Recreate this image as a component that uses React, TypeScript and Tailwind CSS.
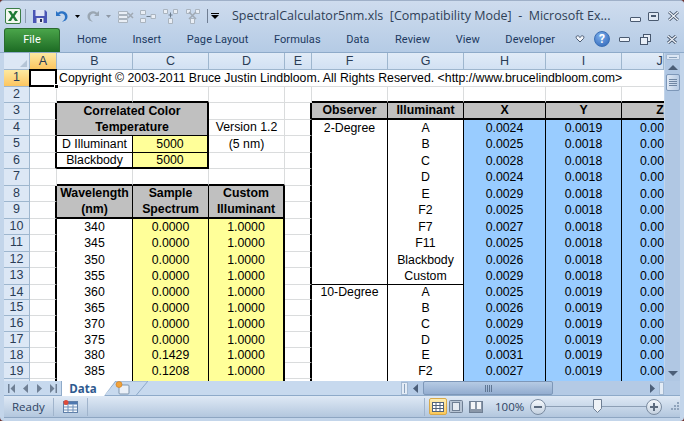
import type { ReactNode } from "react";

const rightBorder = {
  g: "border-r border-r-[#dadcdd]",
  k: "border-r border-r-black",
  K: "border-r-2 border-r-black",
  n: "",
};
const bottomBorder = {
  g: "border-b border-b-[#dadcdd]",
  k: "border-b border-b-black",
  K: "border-b-2 border-b-black",
  n: "",
};
type Line = keyof typeof rightBorder;

function Cell({ r = "g", b = "g", cls = "", children }: { r?: Line; b?: Line; cls?: string; children?: ReactNode }) {
  return (
    <div className={`flex items-center justify-center overflow-hidden whitespace-nowrap ${rightBorder[r]} ${bottomBorder[b]} ${cls}`}>
      {children}
    </div>
  );
}

function ColHead({ label, active, cls = "" }: { label: string; active?: boolean; cls?: string }) {
  return (
    <div className={`flex items-center justify-center border-r border-b border-r-[#9eb6ce] border-b-[#9eb6ce] text-[12.5px] text-[#2a3c55] ${active ? "bg-linear-to-b from-[#fde9a0] to-[#fcc55f]" : "bg-linear-to-b from-[#e1ebf7] to-[#d2e1f3]"}`}>
      <span className={cls}>{label}</span>
    </div>
  );
}

function RowHead({ n, active }: { n: number; active?: boolean }) {
  return (
    <div className={`flex items-center justify-center border-r border-b border-r-[#9eb6ce] border-b-[#9eb6ce] text-[12.5px] text-[#2a3c55] ${active ? "bg-linear-to-b from-[#fde9a0] to-[#fcc55f]" : "bg-[#dce7f5]"}`}>
      {n <= 19 ? n : ""}
    </div>
  );
}

const illuminants = ["A", "B", "C", "D", "E", "F2", "F7", "F11", "Blackbody", "Custom", "A", "B", "C", "D", "E", "F2"];
const xValues = ["0.0024", "0.0025", "0.0028", "0.0024", "0.0029", "0.0025", "0.0027", "0.0025", "0.0026", "0.0029", "0.0025", "0.0026", "0.0029", "0.0025", "0.0031", "0.0027"];
const yValues = ["0.0019", "0.0018", "0.0018", "0.0018", "0.0018", "0.0018", "0.0018", "0.0018", "0.0018", "0.0018", "0.0019", "0.0019", "0.0019", "0.0019", "0.0019", "0.0019"];
const wavelengths = [340, 345, 350, 355, 360, 365, 370, 375, 380, 385];
const samples = ["0.0000", "0.0000", "0.0000", "0.0000", "0.0000", "0.0000", "0.0000", "0.0000", "0.1429", "0.1208"];

const gray = "bg-[#c0c0c0] font-bold";
const yellow = "bg-[#ffff99]";
const blue = "bg-[#99ccff]";

function RightTable({ row }: { row: number }) {
  if (row === 3) {
    return (
      <>
        <Cell r="K" />
        <Cell r="k" b="K" cls={gray}>Observer</Cell>
        <Cell r="k" b="K" cls={gray}>Illuminant</Cell>
        <Cell r="k" b="K" cls={gray}>X</Cell>
        <Cell r="k" b="K" cls={gray}>Y</Cell>
        <Cell r="n" b="K" cls={gray}><span className="ml-[34px]">Z</span></Cell>
      </>
    );
  }
  const i = row - 4;
  const split: Line = row === 13 ? "k" : "n";
  return (
    <>
      <Cell r="K" />
      <Cell r="k" b={split} cls="bg-white">{row === 4 ? "2-Degree" : row === 14 ? "10-Degree" : ""}</Cell>
      <Cell r="k" b={split} cls="bg-white">{illuminants[i]}</Cell>
      <Cell r="k" b="n" cls={blue}>{xValues[i]}</Cell>
      <Cell r="k" b="n" cls={blue}>{yValues[i]}</Cell>
      <Cell r="n" b="n" cls={blue}><span className="ml-[18px]">{row <= 19 ? "0.00" : ""}</span></Cell>
    </>
  );
}

function Sheet() {
  return (
    <div className="w-[660px] h-[328px] overflow-hidden bg-white">
      <div className="grid grid-cols-[26px_27px_76px_76px_76px_27px_76px_76px_82px_76px_42px] grid-rows-[17px_repeat(13,16.5px)_repeat(7,15.8px)] font-['Liberation_Sans',sans-serif] text-[12.3px] text-black">
        <div className="flex items-end justify-end border-r border-b border-r-[#9eb6ce] border-b-[#9eb6ce] bg-[#dce7f5] p-[2px]">
          <svg width="7" height="7" viewBox="0 0 7 7"><path d="M7 0V7H0Z" fill="#b4c4d6" /></svg>
        </div>
        <ColHead label="A" active />
        {["B", "C", "D", "E", "F", "G", "H", "I"].map((c) => <ColHead key={c} label={c} />)}
        <ColHead label="J" cls="ml-[34px]" />

        {/* row 1 */}
        <RowHead n={1} active />
        <div className="relative z-10 border-r border-b border-r-[#dadcdd] border-b-[#dadcdd]">
          <div className="absolute -left-px -top-px -right-px -bottom-px border-2 border-black" />
          <div className="absolute -right-[3px] -bottom-[3px] w-[5px] h-[5px] bg-black border border-white" />
        </div>
        <div className="col-span-9 flex items-center pl-[2px] border-b border-b-[#dadcdd] whitespace-nowrap overflow-hidden">
          Copyright © 2003-2011 Bruce Justin Lindbloom. All Rights Reserved. &lt;http://www.brucelindbloom.com&gt;
        </div>

        {/* row 2 */}
        <RowHead n={2} />
        <Cell />
        <Cell b="K" />
        <Cell b="K" />
        <Cell />
        <Cell />
        <Cell b="K" />
        <Cell b="K" />
        <Cell b="K" />
        <Cell b="K" />
        <Cell r="n" b="K" />

        {/* row 3 */}
        <RowHead n={3} />
        <Cell r="K" />
        <div className={`col-span-2 row-span-2 flex items-center justify-center text-center leading-[16.5px] border-r-2 border-b border-r-black border-b-black ${gray}`}>
          Correlated Color<br />Temperature
        </div>
        <Cell />
        <RightTable row={3} />

        {/* row 4 */}
        <RowHead n={4} />
        <Cell r="K" />
        <Cell>Version 1.2</Cell>
        <RightTable row={4} />

        {/* row 5 */}
        <RowHead n={5} />
        <Cell r="K" />
        <Cell r="k" b="k" cls="bg-white">D Illuminant</Cell>
        <Cell r="K" b="k" cls={yellow}>5000</Cell>
        <Cell>(5 nm)</Cell>
        <RightTable row={5} />

        {/* row 6 */}
        <RowHead n={6} />
        <Cell r="K" />
        <Cell r="k" b="K" cls="bg-white">Blackbody</Cell>
        <Cell r="K" b="K" cls={yellow}>5000</Cell>
        <Cell />
        <RightTable row={6} />

        {/* row 7 */}
        <RowHead n={7} />
        <Cell />
        <Cell b="K" />
        <Cell b="K" />
        <Cell b="K" />
        <RightTable row={7} />

        {/* row 8 and 9: merged headers */}
        <RowHead n={8} />
        <Cell r="K" />
        <div className={`row-span-2 flex items-center justify-center text-center leading-[16.5px] border-r border-b-2 border-r-black border-b-black ${gray}`}>Wavelength<br />(nm)</div>
        <div className={`row-span-2 flex items-center justify-center text-center leading-[16.5px] border-r border-b-2 border-r-black border-b-black ${gray}`}>Sample<br />Spectrum</div>
        <div className={`row-span-2 flex items-center justify-center text-center leading-[16.5px] border-r-2 border-b-2 border-r-black border-b-black ${gray}`}>Custom<br />Illuminant</div>
        <RightTable row={8} />
        <RowHead n={9} />
        <Cell r="K" />
        <RightTable row={9} />

        {wavelengths.map((w, i) => (
          <div key={w} className="contents">
            <RowHead n={i + 10} />
            <Cell r="K" />
            <Cell r="k" b="n" cls="bg-white">{w}</Cell>
            <Cell r="k" b="n" cls={yellow}>{samples[i]}</Cell>
            <Cell r="K" b="n" cls={yellow}>1.0000</Cell>
            <RightTable row={i + 10} />
          </div>
        ))}

        {/* row 20, only its first pixels show above the tab bar */}
        <RowHead n={20} />
        <Cell r="K" />
        <Cell r="k" b="n" cls="bg-white" />
        <Cell r="k" b="n" cls={yellow} />
        <Cell r="K" b="n" cls={yellow} />
        <RightTable row={20} />
      </div>
    </div>
  );
}

function GreyBlock({ d }: { d: string }) {
  return <path d={d} fill="#e9eef5" stroke="#aab4bf" strokeWidth="1" />;
}

function QuickAccess() {
  return (
    <div className="flex items-center h-[25px] pl-[5px] pt-[5px]">
      <svg width="16" height="16" viewBox="0 0 16 16">
        <rect x="0.5" y="0.5" width="15" height="15" rx="1.5" fill="#f3f8ef" stroke="#3b7d47" />
        <path d="M3 3h3l2 3.2L10 3h3L9.6 8 13 13h-3L8 9.8 6 13H3l3.4-5z" fill="#1f7a35" />
      </svg>
      <div className="ml-[4px] w-px h-[14px] bg-[#8c9bb0]" />
      <svg className="ml-[7px]" width="14" height="14" viewBox="0 0 14 14">
        <path d="M0 1h12l2 2v11H0z" fill="#4a55b5" />
        <rect x="2.5" y="1" width="9" height="6" fill="#dfe4f5" />
        <rect x="3.5" y="9" width="7" height="5" fill="#e6e8ef" />
        <rect x="7" y="10" width="2" height="3" fill="#2b2f5e" />
      </svg>
      <svg className="ml-[8px]" width="13" height="13" viewBox="0 0 13 13">
        <path d="M1 1v5h5L4.2 4.4C6.500 2.600 10 3.800 10 7c0 2-1.200 3.500-3 4.500 3.500 0 5.500-2.300 5.500-5C12.500 2 7-.5 3 2.800z" fill="#2c73c5" />
      </svg>
      <svg className="ml-[7px]" width="5" height="3" viewBox="0 0 5 3"><path d="M0 0h5L2.500 3z" fill="#000" /></svg>
      <svg className="ml-[7px]" width="13" height="13" viewBox="0 0 13 13">
        <path d="M12 1v5H7l1.800-1.600C6.500 2.600 3 3.800 3 7c0 2 1.200 3.500 3 4.500-3.500 0-5.500-2.300-5.500-5C.5 2 6-.5 10 2.800z" fill="#9aa6b2" />
      </svg>
      <svg className="ml-[6px]" width="5" height="3" viewBox="0 0 5 3"><path d="M0 0h5L2.500 3z" fill="#8e98a5" /></svg>
      <svg className="ml-[7px]" width="16" height="13" viewBox="0 0 16 13">
        <GreyBlock d="M.5 1.500h9v3h-9z" />
        <GreyBlock d="M.5 5.500h9v3h-9z" />
        <GreyBlock d="M.5 9.500h9v3h-9z" />
        <path d="M10 3l5 5M15 3l-5 5" stroke="#a0a9b3" strokeWidth="1.500" />
      </svg>
      <svg className="ml-[6px]" width="16" height="13" viewBox="0 0 16 13">
        <GreyBlock d="M.5 .5h5v4h-5z" />
        <GreyBlock d="M.5 8.500h5v4h-5z" />
        <GreyBlock d="M11 4.500h4.500v4H11z" />
        <path d="M6.500 6.500h4" stroke="#6d7c8c" />
      </svg>
      <svg className="ml-[7px]" width="15" height="15" viewBox="0 0 15 15">
        <GreyBlock d="M.5 .5h4v4h-4z" />
        <GreyBlock d="M10.500 .5h4v4h-4z" />
        <GreyBlock d="M5.500 9.500h4v5h-4z" />
        <path d="M7.500 3.500v5M5.500 6h4" stroke="#6d7c8c" />
      </svg>
      <svg className="ml-[8px]" width="14" height="15" viewBox="0 0 14 15">
        <GreyBlock d="M.5 .5h4v4h-4z" />
        <GreyBlock d="M9.500 .5h4v4h-4z" />
        <GreyBlock d="M4.500 9.500h4v5h-4z" />
        <path d="M3 3l7 7M10 3l-7 7" stroke="#a0a9b3" strokeWidth="1.500" />
      </svg>
      <div className="ml-[7px] w-px h-[14px] bg-[#6f7e93]" />
      <svg className="ml-[3px]" width="9" height="6" viewBox="0 0 9 6"><path d="M0 0h8v1H0zM0 2h8L4 6z" fill="#000" /></svg>
      <div className="ml-[12px] text-[12.5px] text-[#2f3f57] whitespace-pre font-['Open_Sans',sans-serif]">
        SpectralCalculator5nm.xls  [Compatibility Mode]  -  Microsoft Ex...
      </div>
      <div className="ml-auto flex items-center pr-[4px]">
        <div className="w-[11px] h-[5px] mt-[6px] bg-[#eef3fa] border border-[#4a5a70] rounded-[1px]" />
        <div className="ml-[7px] w-[11px] h-[9px] border border-[#4a5a70] rounded-[1px] bg-[#dfe8f3] flex items-center justify-center">
          <div className="w-[5px] h-[2px] bg-[#4a5a70]" />
        </div>
        <svg className="ml-[8px]" width="13" height="10" viewBox="0 0 13 10">
          <path d="M2 1l9 8M11 1L2 9" stroke="#46566c" strokeWidth="3" />
          <path d="M2 1l9 8M11 1L2 9" stroke="#f0f4fa" strokeWidth="1.200" />
        </svg>
      </div>
    </div>
  );
}

function RibbonTabs() {
  return (
    <div className="flex items-end h-[26px] pl-[4px] font-['Roboto',sans-serif] text-[11px] tracking-[0.1px] text-[#20395f]">
      <div className="w-[56px] h-[24px] flex items-center justify-center rounded-t-[3px] border border-[#2a6b2e] border-b-0 bg-linear-to-b from-[#4aa54a] to-[#1c6b24] text-white">
        File
      </div>
      <div className="ml-[17px] h-[24px] flex items-center gap-[25.5px] whitespace-nowrap">
        {["Home", "Insert", "Page Layout", "Formulas", "Data", "Review", "View", "Developer"].map((t) => (
          <span key={t}>{t}</span>
        ))}
      </div>
      <div className="ml-auto h-[26px] flex items-center pr-[6px]">
        <svg width="10" height="8" viewBox="0 0 10 8">
          <path d="M2.500 .8C1 .8 .8 2.500 1.500 3.500L5 7l3.500-3.500C9.200 2.500 9 .8 7.500 .8 6.300 .8 5.500 1.500 5 2.500 4.500 1.500 3.700 .8 2.500 .8z" fill="#f2f5fa" stroke="#4b5b72" />
        </svg>
        <div className="ml-[9px] w-[16px] h-[16px] rounded-full flex items-center justify-center bg-[radial-gradient(circle_at_40%_30%,#7fb0ee,#2a62b4)] border border-[#3a6fb5] text-white text-[12px] font-bold leading-none">
          ?
        </div>
        <div className="ml-[9px] w-[11px] h-[5px] bg-[#eef3fa] border border-[#4a5a70] rounded-[1px]" />
        <svg className="ml-[10px]" width="11" height="11" viewBox="0 0 11 11">
          <rect x="3.500" y=".5" width="7" height="7" fill="#e7eef7" stroke="#46566c" />
          <rect x=".5" y="3.500" width="7" height="7" fill="#e7eef7" stroke="#46566c" />
        </svg>
        <svg className="ml-[15px]" width="12" height="9" viewBox="0 0 12 9">
          <path d="M2 1l8 7M10 1L2 8" stroke="#46566c" strokeWidth="3" />
          <path d="M2 1l8 7M10 1L2 8" stroke="#f0f4fa" strokeWidth="1.200" />
        </svg>
      </div>
    </div>
  );
}

function VerticalScroll() {
  return (
    <div className="w-[16px] h-[328px] flex flex-col items-center bg-[#b0c7e3] border-l border-l-[#c2d4e9]">
      <div className="w-[14px] h-[6px] mt-[1px] flex items-center justify-center bg-[#dbe6f4] border border-[#a4b9d2] rounded-[1px]">
        <div className="w-[8px] h-px bg-[#8ba2bd]" />
      </div>
      <svg className="mt-[5px]" width="10" height="5" viewBox="0 0 10 5"><path d="M5 0l5 5H0z" fill="#4b5e78" /></svg>
      <div className="mt-[4px] w-[14px] h-[17px] flex flex-col items-center justify-center gap-px rounded-[2px] border border-[#7d97b8] bg-linear-to-r from-[#dfe8f4] to-[#b7cbe4]">
        <div className="w-[8px] h-px bg-[#6f86a3]" />
        <div className="w-[8px] h-px bg-[#6f86a3]" />
        <div className="w-[8px] h-px bg-[#6f86a3]" />
        <div className="w-[8px] h-px bg-[#6f86a3]" />
      </div>
      <svg className="mt-auto mb-[5px]" width="10" height="5" viewBox="0 0 10 5"><path d="M0 0h10L5 5z" fill="#4b5e78" /></svg>
    </div>
  );
}

function Nav({ d }: { d: string }) {
  return <svg width="7" height="9" viewBox="0 0 7 9"><path d={d} fill="#6f7f94" /></svg>;
}

function SheetTabs() {
  return (
    <div className="flex h-[15px] ml-[4px] w-[676px] bg-[#c7d9ee] border-b border-b-[#8eaac9]">
      <div className="w-[58px] flex items-center justify-center gap-[7px] border-r border-r-[#8eaac9]">
        <Nav d="M0 0h1.500v9H0zM7 0v9L2.500 4.500z" />
        <Nav d="M6 0v9L1 4.500z" />
        <Nav d="M1 0v9l5-4.500z" />
        <Nav d="M0 0v9l4.500-4.500zM5.500 0H7v9H5.500z" />
      </div>
      <div className="w-[42px] h-[15px] bg-white flex items-center justify-center font-['Open_Sans',sans-serif] font-bold text-[11.5px] text-[#2e5a8f]">
        Data
      </div>
      <svg width="44" height="15" viewBox="0 0 44 15">
        <path d="M0 15V14.500L12 0H44L32 14.500H1" fill="#c7d9ee" stroke="#8eaac9" />
        <path d="M0 15V0H11z" fill="#fff" />
        <rect x="15" y="4" width="10" height="9" rx="1" fill="#eaf0f8" stroke="#7f95ad" />
        <circle cx="15" cy="3.500" r="3" fill="#f2a33a" stroke="#c9781e" strokeWidth=".6" />
      </svg>
      <div className="w-[253px]" />
      <div className="flex-1 flex items-center bg-[#b4cae5]">
        <div className="w-[7px] h-[13px] bg-[#e4ecf6] border border-[#a3b8d1] flex items-center justify-center">
          <div className="w-px h-[9px] bg-[#8ba2bd]" />
        </div>
        <svg className="ml-[5px]" width="5" height="9" viewBox="0 0 5 9"><path d="M5 0v9L0 4.500z" fill="#4b5e78" /></svg>
        <div className="ml-[5px] w-[130px] h-[14px] flex items-center justify-center gap-px rounded-[2px] border border-[#7d97b8] bg-linear-to-b from-[#b6cbe4] to-[#93add0]">
          <div className="w-px h-[7px] bg-[#5f7693]" />
          <div className="w-px h-[7px] bg-[#5f7693]" />
          <div className="w-px h-[7px] bg-[#5f7693]" />
          <div className="w-px h-[7px] bg-[#5f7693]" />
        </div>
        <svg className="ml-auto" width="5" height="9" viewBox="0 0 5 9"><path d="M0 0v9l5-4.500z" fill="#4b5e78" /></svg>
        <div className="ml-[4px] mr-[16px] w-[5px] h-[13px] bg-[#e4ecf6] border border-[#a3b8d1]" />
      </div>
    </div>
  );
}

function StatusBar() {
  return (
    <div className="flex items-center h-[22px] ml-[4px] w-[676px] bg-linear-to-b from-[#dfe9f5] to-[#b3c7de] border-b border-b-[#8ea6c2] font-['Open_Sans',sans-serif] text-[11.5px] text-[#2e4463]">
      <span className="ml-[8px] w-[41px]">Ready</span>
      <div className="w-px h-[18px] bg-[#a0b4cc]" />
      <svg className="ml-[9px]" width="15" height="13" viewBox="0 0 15 13">
        <rect x=".5" y="1.500" width="14" height="11" fill="#f5f8fc" stroke="#5f7fa8" />
        <rect x="1" y="2" width="13" height="2.500" fill="#4f78b0" />
        <path d="M1 7h13M1 10h13M5 4.500v8M10 4.500v8" stroke="#6f8fb8" />
        <circle cx="3" cy="2.500" r="2.500" fill="#dd4b3a" />
      </svg>
      <div className="ml-[9px] w-px h-[18px] bg-[#a0b4cc]" />
      <div className="ml-[336px] w-px h-[18px] bg-[#a0b4cc]" />
      <div className="ml-[4px] w-[18px] h-[17px] flex items-center justify-center rounded-[2px] border border-[#d9a94a] bg-linear-to-b from-[#fdeeb3] to-[#fbc957]">
        <svg width="12" height="10" viewBox="0 0 12 10">
          <rect x=".5" y=".5" width="11" height="9" fill="#fff" stroke="#51637b" />
          <path d="M.5 3.500h11M.5 6.500h11M4 .5v9M8 .5v9" stroke="#51637b" />
        </svg>
      </div>
      <svg className="ml-[2px]" width="14" height="13" viewBox="0 0 14 13">
        <rect x=".5" y=".5" width="13" height="12" rx="1" fill="#b7c4d4" stroke="#6f7f94" />
        <rect x="3.500" y="2.500" width="7" height="8" fill="#e6ebf2" stroke="#6f7f94" />
      </svg>
      <svg className="ml-[6px]" width="14" height="12" viewBox="0 0 14 12">
        <rect x=".5" y=".5" width="13" height="11" fill="#8a97a8" stroke="#6f7f94" />
        <rect x="2" y="1" width="4" height="7" fill="#f3f5f8" />
        <rect x="8" y="1" width="4" height="7" fill="#f3f5f8" />
      </svg>
      <span className="ml-[12px] w-[27px] text-center">100%</span>
      <div className="ml-[8px] w-[16px] h-[16px] rounded-full flex items-center justify-center border border-[#7a8ba0] bg-linear-to-b from-[#f6f9fc] to-[#c4d1e0]">
        <div className="w-[8px] h-[2px] bg-[#5c6b7e]" />
      </div>
      <div className="relative w-[100px] h-px bg-[#8d9fb5]">
        <svg className="absolute left-[47px] -top-[7px]" width="9" height="14" viewBox="0 0 9 14">
          <path d="M.5 .5h8v9l-4 4-4-4z" fill="#eef2f7" stroke="#6f7f94" />
        </svg>
      </div>
      <div className="w-[16px] h-[16px] rounded-full flex items-center justify-center relative border border-[#7a8ba0] bg-linear-to-b from-[#f6f9fc] to-[#c4d1e0]">
        <div className="w-[8px] h-[2px] bg-[#5c6b7e]" />
        <div className="absolute w-[2px] h-[8px] bg-[#5c6b7e]" />
      </div>
      <svg className="ml-[7px]" width="11" height="11" viewBox="0 0 11 11">
        <path d="M8 1h2v2H8zM5 4h2v2H5zM8 4h2v2H8zM2 7h2v2H2zM5 7h2v2H5zM8 7h2v2H8z" fill="#8fa3bb" />
      </svg>
    </div>
  );
}

export default function App() {
  return (
    <div className="w-[684px] h-[421px] overflow-hidden bg-[#6f2f2a]">
      <div className="w-full h-full rounded-[4px] overflow-hidden bg-[#c3d5ea] border-t border-t-[#9fb0c8]">
        <div className="h-[51px] bg-linear-to-b from-[#cedcee] to-[#b5cbe5]">
          <QuickAccess />
          <RibbonTabs />
        </div>
        <div className="flex pl-[4px] border-t border-t-[#8eaac9]">
          <Sheet />
          <VerticalScroll />
        </div>
        <SheetTabs />
        <StatusBar />
      </div>
    </div>
  );
}
